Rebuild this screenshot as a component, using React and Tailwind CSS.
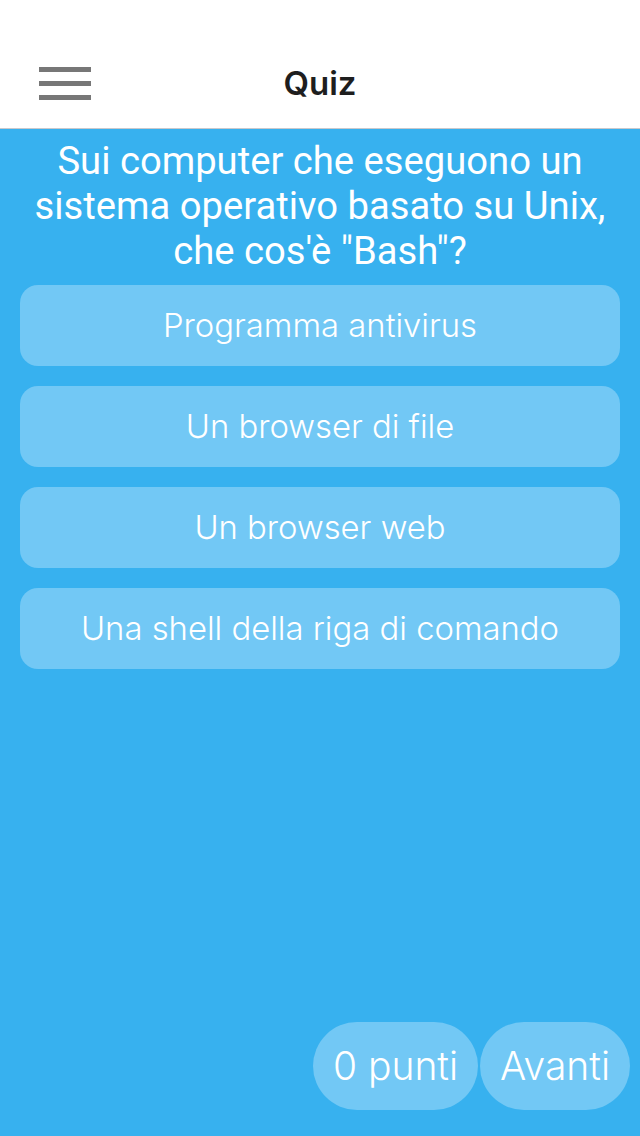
export default function App() {
  const options = [
    "Programma antivirus",
    "Un browser di file",
    "Un browser web",
    "Una shell della riga di comando",
  ];
  return (
    <div className="w-[640px] h-[1136px] flex flex-col bg-[#37b1ef] overflow-hidden">
      <header className="h-[129px] shrink-0 bg-white border-b border-[#c8c8cc] flex items-end pb-[24px] relative">
        <div className="pl-[39px] flex flex-col gap-[9px] pb-[4px]">
          <div className="w-[52px] h-[5px] bg-[#777777]" />
          <div className="w-[52px] h-[5px] bg-[#777777]" />
          <div className="w-[52px] h-[5px] bg-[#777777]" />
        </div>
        <div className="absolute left-0 right-0 bottom-[25px] text-center text-[33px] font-semibold text-[#1e1e1e] leading-[40px] [font-family:Inter,sans-serif]">
          Quiz
        </div>
      </header>
      <main className="flex-1 flex flex-col px-[20px]">
        <h1 className="text-white text-[38.2px] leading-[45px] text-center font-normal pt-[10px] pb-[11px] [font-family:Roboto,sans-serif]">
          Sui computer che eseguono un sistema operativo basato su Unix, che cos'è "Bash"?
        </h1>
        <div className="flex flex-col gap-[20px] [font-family:Inter,sans-serif]">
          {options.map((o) => (
            <button
              key={o}
              className="h-[81px] w-full rounded-[18px] bg-[#72c8f5] text-white text-[32.8px] font-light flex items-center justify-center pt-[1px]"
            >
              {o}
            </button>
          ))}
        </div>
        <div className="flex-1" />
        <div className="flex justify-end gap-[2px] pb-[26px] mr-[-10px] [font-family:Inter,sans-serif]">
          <div className="h-[88px] w-[165px] rounded-full bg-[#72c8f5] text-white text-[39px] font-light flex items-center justify-center">
            0 punti
          </div>
          <div className="h-[88px] w-[150px] rounded-full bg-[#72c8f5] text-white text-[39px] font-light flex items-center justify-center">
            Avanti
          </div>
        </div>
      </main>
    </div>
  );
}
